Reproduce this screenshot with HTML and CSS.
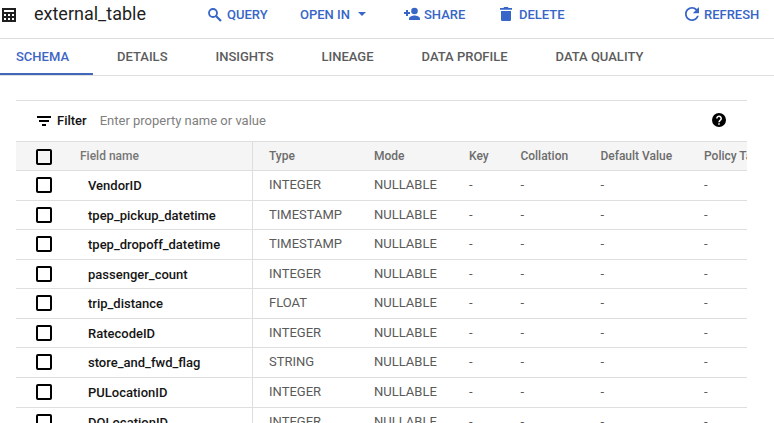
FILE: index.html
```html
<!DOCTYPE html>
<html lang="en">
<head>
<meta charset="utf-8">
<title>external_table</title>
<link rel="stylesheet" href="styles.css">
</head>
<body>
<header class="toolbar">
  <svg class="table-icon" width="14" height="14" viewBox="0 0 14 14"><path fill="#1f1f1f" fill-rule="evenodd" d="M0 0h14v14H0zM2 2v2h10V2zM2 6v2h2V6zM6 6v2h2V6zM10 6v2h2V6zM2 10v2h2v-2zM6 10v2h2v-2zM10 10v2h2v-2z"/></svg>
  <h1 class="title">external_table</h1>
  <button class="action query"><svg width="14" height="14" viewBox="0 0 14 14"><circle cx="5" cy="5" r="4" fill="none" stroke="currentColor" stroke-width="1.800"/><path d="M8 8l5 5" stroke="currentColor" stroke-width="2.200"/></svg><span>QUERY</span></button>
  <button class="action open"><span>OPEN IN</span><svg width="8" height="4" viewBox="0 0 8 4"><path fill="currentColor" d="M0 0h8L4 4z"/></svg></button>
  <button class="action share"><svg width="17" height="14" viewBox="0 0 17 14"><path fill="currentColor" d="M2 3h2v2h2v2H4v2H2V7H0V5h2z"/><circle cx="10.500" cy="4" r="3.300" fill="currentColor"/><path fill="currentColor" d="M5 13v-1.600C5 9.300 8.600 8.400 10.500 8.400S16 9.300 16 11.400V13z"/></svg><span>SHARE</span></button>
  <button class="action delete"><svg width="12" height="14" viewBox="0 0 12 14"><path fill="currentColor" d="M0 1h3.300l.9-1h3.600l.9 1H12v1.700H0zM1 4h10v8.400c0 .9-.7 1.600-1.600 1.600H2.600C1.700 14 1 13.300 1 12.400z"/></svg><span>DELETE</span></button>
  <button class="action refresh"><svg width="14" height="14" viewBox="4 4 16 16"><path fill="currentColor" d="M17.650 6.350C16.200 4.900 14.210 4 12 4c-4.420 0-8 3.580-8 8s3.580 8 8 8c3.730 0 6.840-2.550 7.730-6h-2.080c-.820 2.330-3.040 4-5.650 4-3.310 0-6-2.690-6-6s2.690-6 6-6c1.660 0 3.140.690 4.220 1.780L13 11h7V4z"/></svg><span>REFRESH</span></button>
</header>
<nav class="tabs">
  <a class="tab active"><span>SCHEMA</span></a>
  <a class="tab"><span>DETAILS</span></a>
  <a class="tab"><span>INSIGHTS</span></a>
  <a class="tab"><span>LINEAGE</span></a>
  <a class="tab"><span>DATA PROFILE</span></a>
  <a class="tab"><span>DATA QUALITY</span></a>
</nav>
<main class="panel">
  <div class="filter">
    <svg width="14" height="10" viewBox="0 0 14 10"><path fill="#000" d="M0 0h14v2H0zM2 4h10v2H2zM5 8h4v2H5z"/></svg>
    <span class="filter-label">Filter</span>
    <span class="placeholder">Enter property name or value</span>
    <svg class="help" width="14" height="14" viewBox="0 0 14 14"><circle cx="7" cy="7" r="7" fill="#000"/><path d="M4.800 5.400a2.200 2.200 0 1 1 3.500 1.800C7.500 7.800 7 8.100 7 9.200" fill="none" stroke="#fff" stroke-width="1.500"/><path fill="#fff" d="M6.250 10.200h1.500v1.500h-1.500z"/></svg>
  </div>
  <div class="grid">
    <div class="row head"><i class="check"></i><span class="name">Field name</span><span>Type</span><span>Mode</span><span>Key</span><span>Collation</span><span>Default Value</span><span>Policy Tags</span></div>
    <div class="row"><i class="check"></i><span class="name">VendorID</span><span>INTEGER</span><span>NULLABLE</span><span>-</span><span>-</span><span>-</span><span>-</span></div>
    <div class="row short"><i class="check"></i><span class="name">tpep_pickup_datetime</span><span>TIMESTAMP</span><span>NULLABLE</span><span>-</span><span>-</span><span>-</span><span>-</span></div>
    <div class="row"><i class="check"></i><span class="name">tpep_dropoff_datetime</span><span>TIMESTAMP</span><span>NULLABLE</span><span>-</span><span>-</span><span>-</span><span>-</span></div>
    <div class="row short"><i class="check"></i><span class="name">passenger_count</span><span>INTEGER</span><span>NULLABLE</span><span>-</span><span>-</span><span>-</span><span>-</span></div>
    <div class="row"><i class="check"></i><span class="name">trip_distance</span><span>FLOAT</span><span>NULLABLE</span><span>-</span><span>-</span><span>-</span><span>-</span></div>
    <div class="row short"><i class="check"></i><span class="name">RatecodeID</span><span>INTEGER</span><span>NULLABLE</span><span>-</span><span>-</span><span>-</span><span>-</span></div>
    <div class="row"><i class="check"></i><span class="name">store_and_fwd_flag</span><span>STRING</span><span>NULLABLE</span><span>-</span><span>-</span><span>-</span><span>-</span></div>
    <div class="row"><i class="check"></i><span class="name">PULocationID</span><span>INTEGER</span><span>NULLABLE</span><span>-</span><span>-</span><span>-</span><span>-</span></div>
    <div class="row short"><i class="check"></i><span class="name">DOLocationID</span><span>INTEGER</span><span>NULLABLE</span><span>-</span><span>-</span><span>-</span><span>-</span></div>
  </div>
</main>
</body>
</html>
```
FILE: styles.css
```css
* { box-sizing: border-box; }
html, body { height: 423px; overflow: hidden; }
body { margin: 0; background: #fff; color: #5a5a5a; font: 13px/16px Roboto, sans-serif; }
svg { display: block; flex: none; }

.toolbar {
  display: grid;
  grid-template-columns: 34px 174px 92px 104px 96px 185px auto;
  height: 39px;
  padding-top: 7px;
  border-bottom: 1px solid #dedede;
  align-items: start;
}
.table-icon { margin: 1px 0 0 2px; }
.title { margin: -5px 0 0; font-size: 18px; line-height: 24px; font-weight: 400; color: #1f1f1f; white-space: nowrap; }
.action {
  display: flex;
  align-items: center;
  height: 16px;
  margin: 0;
  padding: 0;
  border: 0;
  background: none;
  color: #3765c8;
  font: 500 13px/16px Roboto, sans-serif;
  white-space: nowrap;
}
.action svg { margin-top: -2px; }
.query { gap: 5px; }
.query svg { margin-top: -1px; }
.open { gap: 8px; }
.share { gap: 3px; }
.delete { gap: 7px; }
.refresh { gap: 5px; }

.tabs { display: flex; height: 37px; border-bottom: 1px solid #dedede; }
.tab { height: 36px; padding: 10px 24px 0; font-weight: 500; color: #5c5c5c; white-space: nowrap; }
.tab.active { padding-left: 16px; color: #3d66c4; border-bottom: 2px solid #4267b8; }

.panel { width: 731px; margin: 24px 0 0 16px; border-top: 1px solid #dedede; overflow: hidden; }
.filter { display: flex; align-items: center; height: 40px; padding: 0 21px; }
.filter-label { margin-left: 6px; font-weight: 500; color: #111; }
.placeholder { margin-left: 13px; color: #808080; }
.help { margin: -2px 0 0 auto; }

.grid { border-top: 1px solid #dedede; }
.row {
  display: grid;
  grid-template-columns: 64px 173px 105px 95px 51.400px 80px 103.600px 80px;
  height: 30px;
  border-bottom: 1px solid #dedede;
  white-space: nowrap;
}
.short { height: 29px; }
.row > span { padding: 6px 0 0 16px; margin-right: -16px; }
.row > .name { padding: 7px 0 0 8px; margin-right: 0; border-right: 1px solid #dedede; color: #151515; font-weight: 500; }
.check { width: 16px; height: 16px; margin: 6px 0 0 20px; border: 2px solid #000; border-radius: 2px; }
.head { height: 29px; background: #f5f5f5; color: #6c6c6c; font-weight: 500; font-size: 12px; }
.head > .name { color: #777; padding: 6px 0 0; }
.head .check { margin-top: 7px; }
```
